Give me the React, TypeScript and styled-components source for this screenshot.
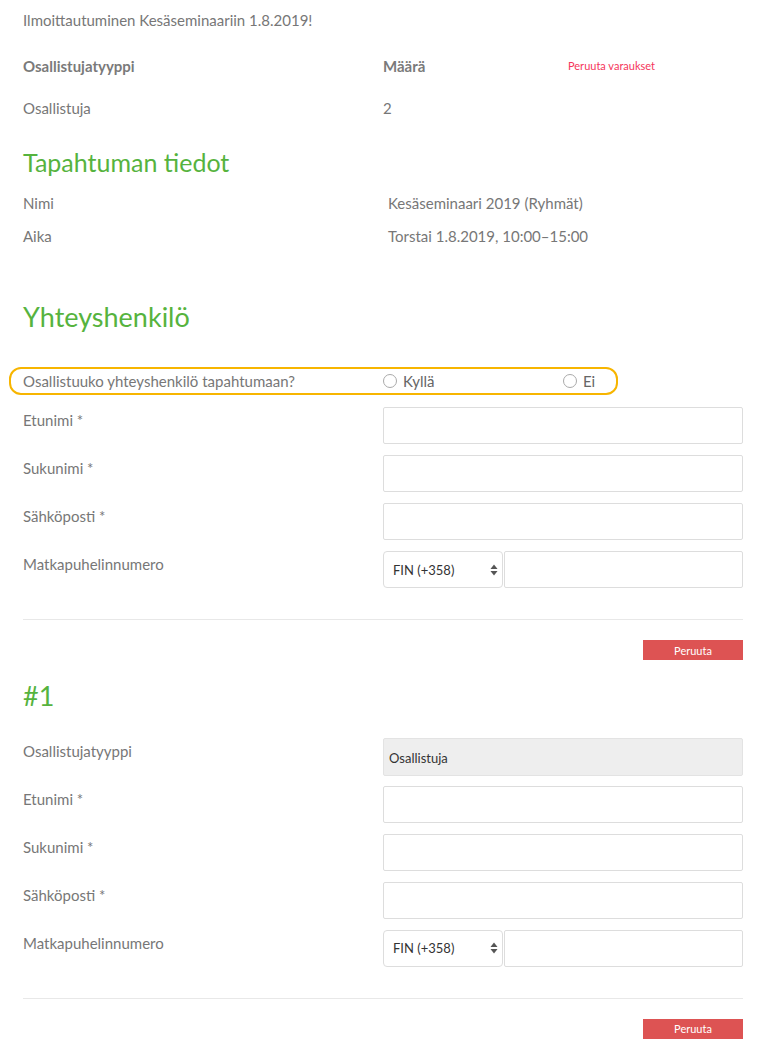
import React from "react";
import styled, { createGlobalStyle } from "styled-components";

const Global = createGlobalStyle`
  html, body { margin: 0; padding: 0; background: #fff; }
  body { font-family: Lato, "Open Sans", sans-serif; color: #777; font-size: 15px; }
  * { box-sizing: border-box; }
`;

const Page = styled.div`
  width: 759px;
  padding: 11px 16px 4px 23px;
`;

const Intro = styled.div`
  line-height: 18px;
  color: #777;
`;

const SummaryRow = styled.div<{ $top: number }>`
  display: grid;
  grid-template-columns: 360px 185px 1fr;
  align-items: center;
  margin-top: ${(p) => p.$top}px;
  line-height: 18px;
`;

const Bold = styled.span`
  font-weight: 700;
  color: #7a7a7a;
`;

const CancelLink = styled.a`
  color: #f5365c;
  font-size: 11px;
  text-decoration: none;
  cursor: pointer;
`;

const Heading = styled.h2<{ $size: number; $top: number }>`
  margin: ${(p) => p.$top}px 0 0;
  font-size: ${(p) => p.$size}px;
  font-weight: 400;
  color: #56b33e;
  line-height: 1.2;
`;

const InfoRow = styled.div<{ $top: number }>`
  display: grid;
  grid-template-columns: 365px 1fr;
  margin-top: ${(p) => p.$top}px;
  line-height: 18px;
`;

const QuestionBox = styled.div`
  margin: 34px 0 0 -14px;
  width: 609px;
  height: 28px;
  border: 2px solid #f7b500;
  border-radius: 12px;
  display: grid;
  grid-template-columns: 360px 180px 1fr;
  align-items: center;
  padding-left: 12px;
`;

const RadioLabel = styled.label`
  display: flex;
  align-items: center;
  gap: 6px;
  color: #666;
`;

const RadioCircle = styled.span`
  width: 14px;
  height: 14px;
  border-radius: 50%;
  border: 1px solid #aaa;
  background: #fff;
  display: inline-block;
`;

const FormRow = styled.div<{ $top?: number }>`
  display: grid;
  grid-template-columns: 360px 360px;
  margin-top: ${(p) => p.$top ?? 11}px;
`;

const FieldLabel = styled.div`
  padding-top: 4px;
  line-height: 18px;
  color: #777;
`;

const TextInput = styled.input`
  height: 37px;
  width: 360px;
  border: 1px solid #ddd;
  border-radius: 2px;
  background: #fff;
  font: inherit;
  outline: none;
`;

const PhoneGroup = styled.div`
  display: flex;
`;

const CountrySelect = styled.div`
  width: 120px;
  height: 37px;
  border: 1px solid #ddd;
  border-radius: 4px;
  display: flex;
  align-items: center;
  justify-content: space-between;
  padding: 0 4px 0 9px;
  color: #333;
  font-size: 13px;
`;

const PhoneInput = styled(TextInput)`
  width: 240px;
  margin-left: 1px;
`;

const ReadOnly = styled.div`
  height: 38px;
  width: 360px;
  border: 1px solid #e3e3e3;
  background: #eee;
  border-radius: 2px;
  display: flex;
  align-items: center;
  padding-left: 5px;
  padding-top: 2px;
  color: #333;
  font-size: 13px;
`;

const Divider = styled.hr`
  margin: 31px 0 0;
  border: 0;
  border-top: 1px solid #e8e8e8;
  width: 720px;
`;

const Actions = styled.div`
  display: flex;
  justify-content: flex-end;
  width: 720px;
  margin-top: 20px;
`;

const CancelButton = styled.button`
  width: 100px;
  height: 20px;
  border: 0;
  background: #dd5353;
  color: #fff;
  font-family: inherit;
  font-size: 11px;
  padding: 0;
`;

const Arrows = () => (
  <svg width="8" height="12" viewBox="0 0 8 12">
    <path d="M4 0.5 L7.5 5 L0.5 5 Z" fill="#555" />
    <path d="M4 11.5 L7.5 7 L0.5 7 Z" fill="#555" />
  </svg>
);

const Phone = () => (
  <PhoneGroup>
    <CountrySelect>
      <span>FIN (+358)</span>
      <Arrows />
    </CountrySelect>
    <PhoneInput />
  </PhoneGroup>
);

export default function App() {
  return (
    <Page>
      <Global />
      <Intro>Ilmoittautuminen Kesäseminaariin 1.8.2019!</Intro>
      <SummaryRow $top={28}>
        <Bold>Osallistujatyyppi</Bold>
        <Bold>Määrä</Bold>
        <CancelLink>Peruuta varaukset</CancelLink>
      </SummaryRow>
      <SummaryRow $top={24}>
        <span>Osallistuja</span>
        <span>2</span>
        <span />
      </SummaryRow>

      <Heading $size={25} $top={30}>Tapahtuman tiedot</Heading>
      <InfoRow $top={17}>
        <span>Nimi</span>
        <span>Kesäseminaari 2019 (Ryhmät)</span>
      </InfoRow>
      <InfoRow $top={15}>
        <span>Aika</span>
        <span>Torstai 1.8.2019, 10:00–15:00</span>
      </InfoRow>

      <Heading $size={27} $top={56}>Yhteyshenkilö</Heading>
      <QuestionBox>
        <span>Osallistuuko yhteyshenkilö tapahtumaan?</span>
        <RadioLabel>
          <RadioCircle />
          Kyllä
        </RadioLabel>
        <RadioLabel>
          <RadioCircle />
          Ei
        </RadioLabel>
      </QuestionBox>
      <FormRow $top={12}>
        <FieldLabel>Etunimi *</FieldLabel>
        <TextInput />
      </FormRow>
      <FormRow>
        <FieldLabel>Sukunimi *</FieldLabel>
        <TextInput />
      </FormRow>
      <FormRow>
        <FieldLabel>Sähköposti *</FieldLabel>
        <TextInput />
      </FormRow>
      <FormRow>
        <FieldLabel>Matkapuhelinnumero</FieldLabel>
        <Phone />
      </FormRow>
      <Divider />
      <Actions>
        <CancelButton>Peruuta</CancelButton>
      </Actions>

      <Heading $size={27} $top={20}>#1</Heading>
      <FormRow $top={25}>
        <FieldLabel>Osallistujatyyppi</FieldLabel>
        <ReadOnly>Osallistuja</ReadOnly>
      </FormRow>
      <FormRow $top={10}>
        <FieldLabel>Etunimi *</FieldLabel>
        <TextInput />
      </FormRow>
      <FormRow>
        <FieldLabel>Sukunimi *</FieldLabel>
        <TextInput />
      </FormRow>
      <FormRow>
        <FieldLabel>Sähköposti *</FieldLabel>
        <TextInput />
      </FormRow>
      <FormRow>
        <FieldLabel>Matkapuhelinnumero</FieldLabel>
        <Phone />
      </FormRow>
      <Divider />
      <Actions>
        <CancelButton>Peruuta</CancelButton>
      </Actions>
    </Page>
  );
}
